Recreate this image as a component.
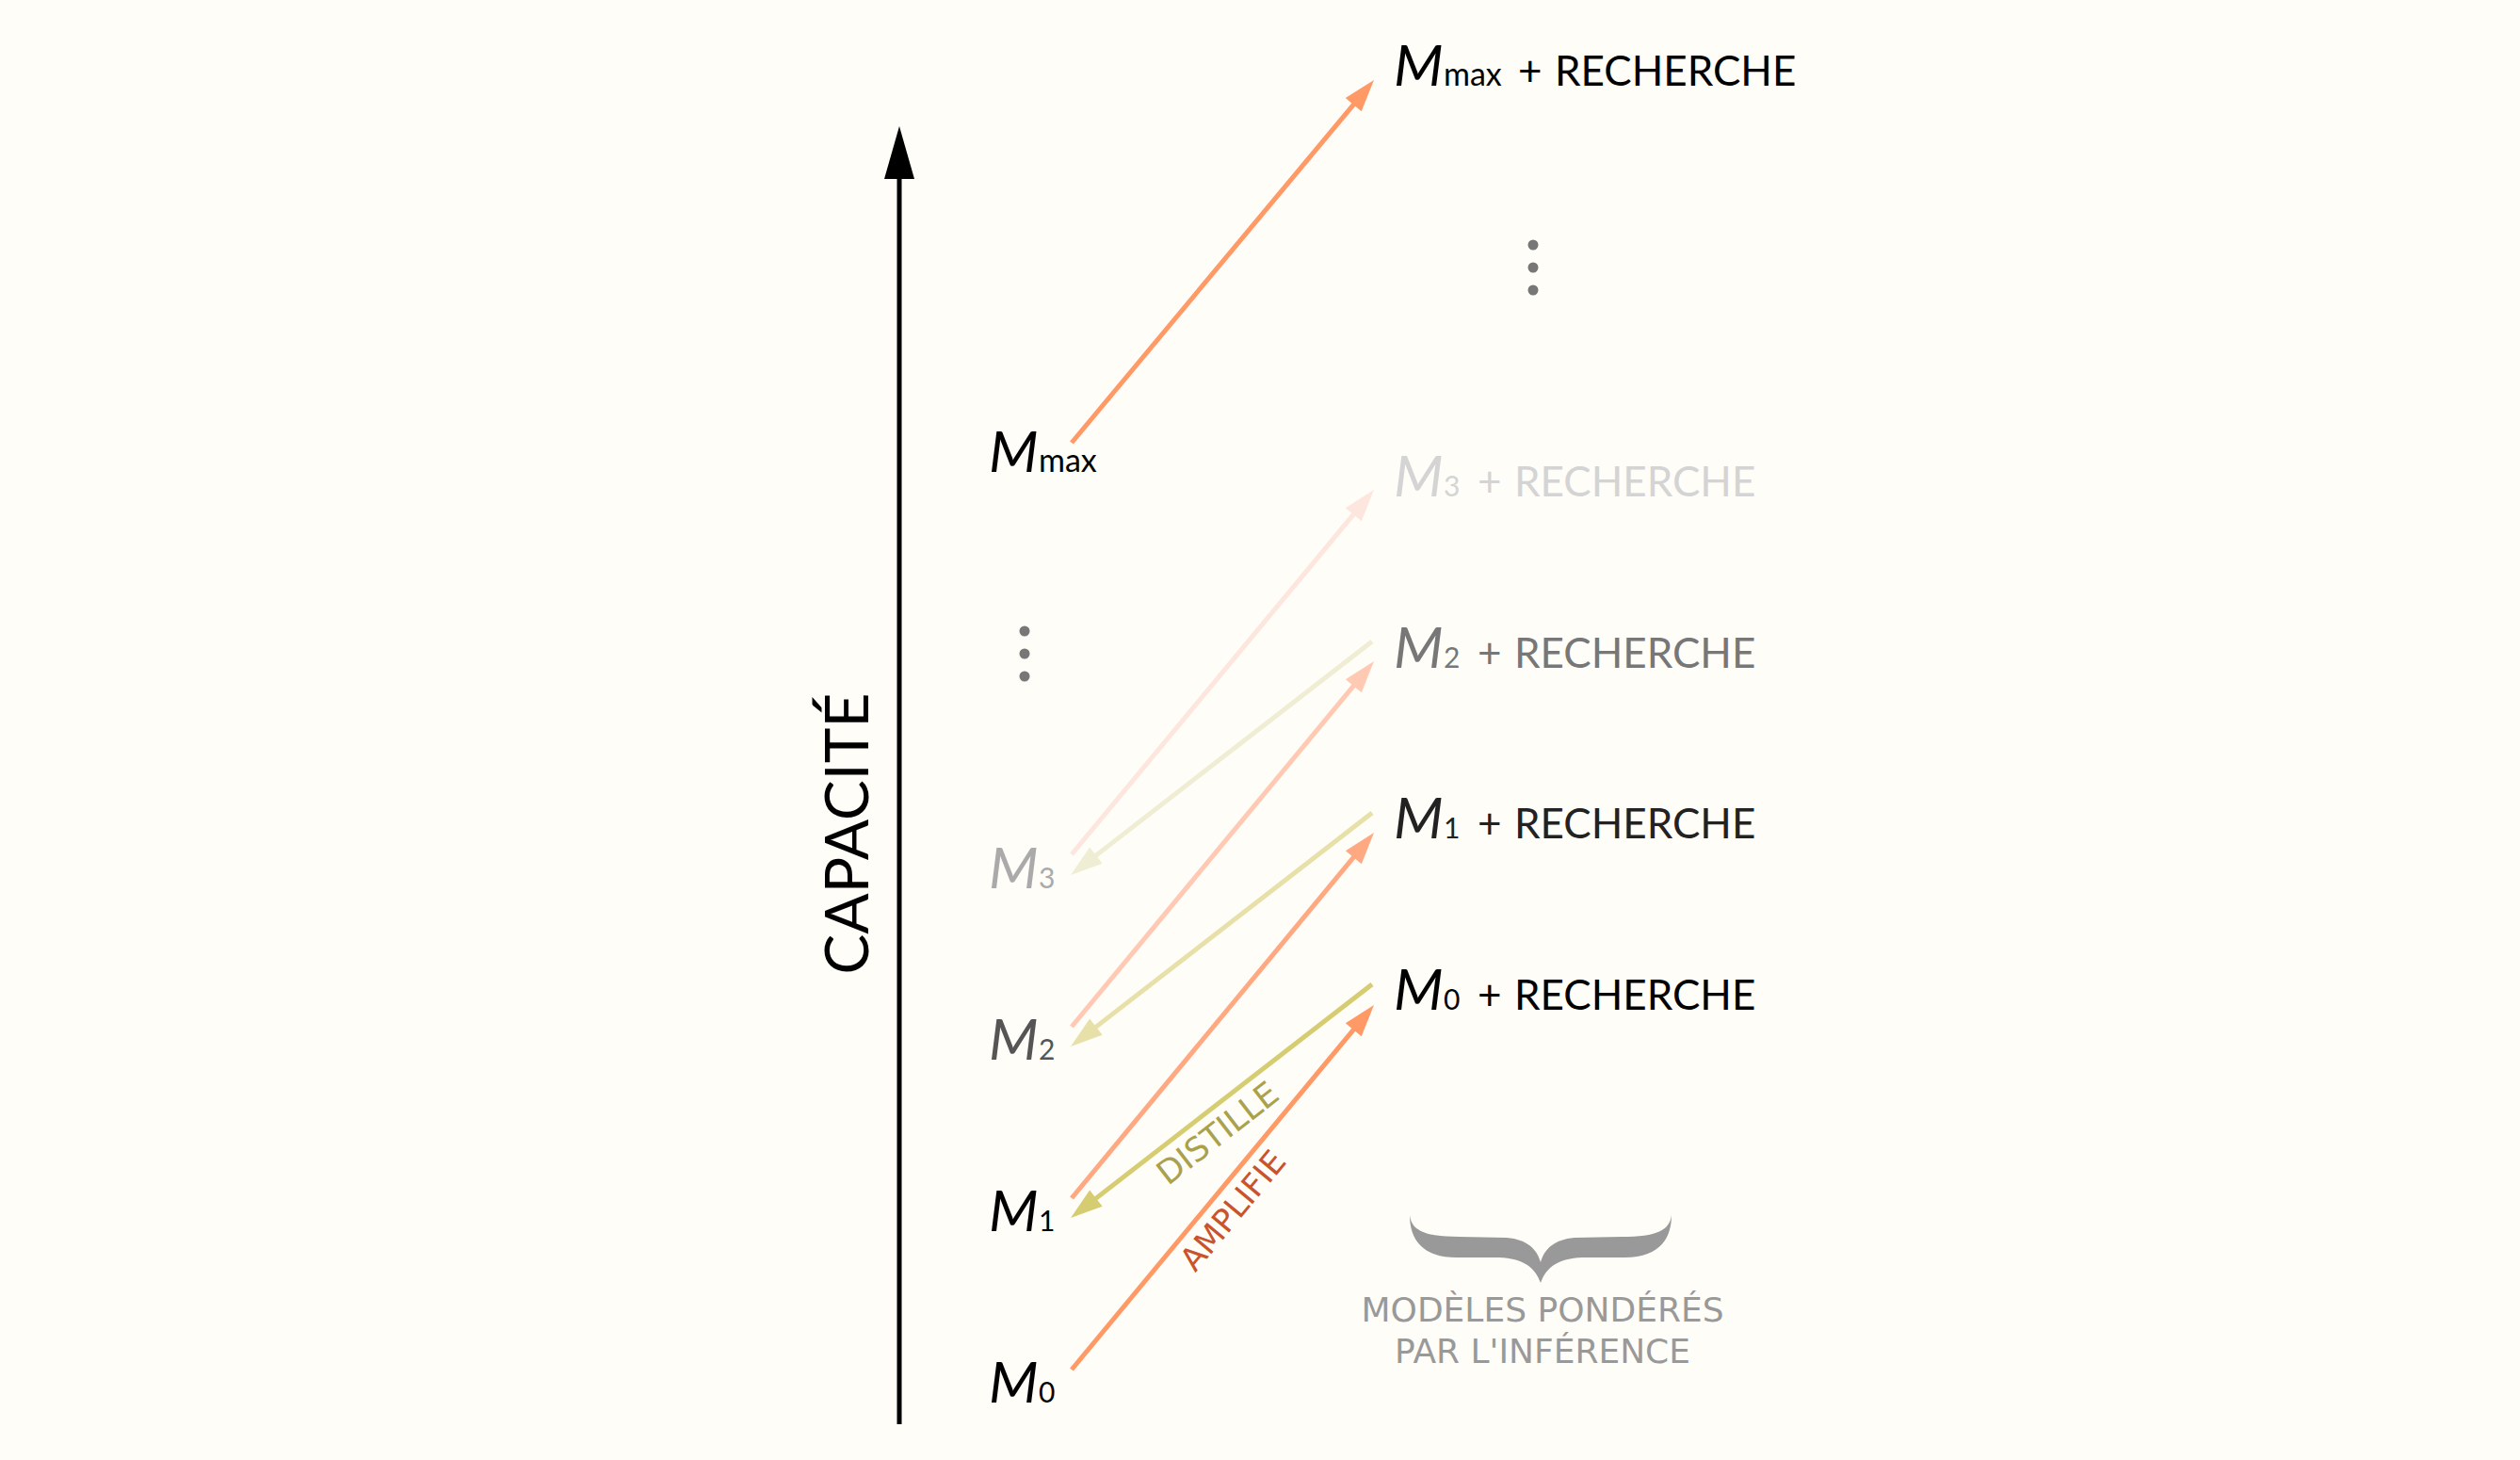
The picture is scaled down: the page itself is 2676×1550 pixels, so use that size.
type Pt = [number, number]

// amplify: M_i -> M_i + recherche (head at the right end)
const amplify: { from: Pt; to: Pt; color: string }[] = [
  { from: [1138, 907], to: [1459, 520], color: '#fde6dd' },
  { from: [1138, 1090], to: [1459, 702], color: '#ffc9b3' },
  { from: [1138, 1272], to: [1459, 884], color: '#ffa982' },
  { from: [1138, 1454], to: [1459, 1067], color: '#ff9966' },
  { from: [1138, 470], to: [1459, 85], color: '#ff9966' },
]

// distill: M_i + recherche -> M_i+1 (head at the left end)
const distill: { from: Pt; to: Pt; color: string }[] = [
  { from: [1457, 681], to: [1137, 929], color: '#efedd3' },
  { from: [1457, 863], to: [1137, 1111], color: '#e7e1a9' },
  { from: [1457, 1045], to: [1137, 1293], color: '#d6cd72' },
]

function Arrow({ from, to, color }: { from: Pt; to: Pt; color: string }) {
  const [x1, y1] = from
  const [x2, y2] = to
  const len = Math.hypot(x2 - x1, y2 - y1)
  const ux = (x2 - x1) / len
  const uy = (y2 - y1) / len
  const head = 34
  const hw = 11
  const bx = x2 - ux * head
  const by = y2 - uy * head
  const pts = `${x2},${y2} ${bx - uy * hw},${by + ux * hw} ${bx + uy * hw},${by - ux * hw}`
  return (
    <g>
      <line x1={x1} y1={y1} x2={bx + ux * 2} y2={by + uy * 2} stroke={color} strokeWidth={5} />
      <polygon points={pts} fill={color} />
    </g>
  )
}

const left = [
  { sub: 'max', y: 501, color: '#000000', big: true },
  { sub: '3', y: 943, color: '#aaaaaa' },
  { sub: '2', y: 1125, color: '#555555' },
  { sub: '1', y: 1307, color: '#000000' },
  { sub: '0', y: 1489, color: '#000000' },
]

const right = [
  { sub: 'max', y: 91, color: '#000000', big: true },
  { sub: '3', y: 527, color: '#d4d4d4' },
  { sub: '2', y: 709, color: '#777777' },
  { sub: '1', y: 890, color: '#222222' },
  { sub: '0', y: 1072, color: '#000000' },
]

function ModelLabel({ x, y, sub, color, big }: { x: number; y: number; sub: string; color: string; big?: boolean }) {
  return (
    <g fill={color} className="font-['Lato','Open_Sans',sans-serif]">
      <text x={x} y={y} fontSize={61} fontStyle="italic">M</text>
      <text x={x + 53} y={y} fontSize={big ? 34 : 30}>{sub}</text>
    </g>
  )
}

function Dots({ x, y }: { x: number; y: number }) {
  return (
    <g fill="#777777">
      <circle cx={x} cy={y} r={5.5} />
      <circle cx={x} cy={y + 24} r={5.5} />
      <circle cx={x} cy={y + 48} r={5.5} />
    </g>
  )
}

export default function App() {
  return (
    <div className="relative w-screen h-screen overflow-hidden bg-[#fffdf8]">
      <svg className="absolute inset-0" width={2676} height={1550} viewBox="0 0 2676 1550">
        {/* capacity axis */}
        <line x1={955} y1={1512} x2={955} y2={186} stroke="#000" strokeWidth={5} />
        <polygon points="955,134 939,190 971,190" fill="#000" />
        <text
          transform="translate(922 885) rotate(-90)"
          textAnchor="middle"
          fontSize={64}
          className="font-['Lato',sans-serif]"
          fill="#000"
        >
          CAPACITÉ
        </text>

        {distill.map((a, i) => <Arrow key={`d${i}`} {...a} />)}
        {amplify.map((a, i) => <Arrow key={`a${i}`} {...a} />)}

        {left.map(l => <ModelLabel key={`l${l.sub}`} x={1050} y={l.y} sub={l.sub} color={l.color} big={l.big} />)}

        {right.map(r => (
          <g key={`r${r.sub}`}>
            <ModelLabel x={1480} y={r.y} sub={r.sub} color={r.color} big={r.big} />
            <text
              x={r.big ? 1612 : 1569}
              y={r.y}
              fontSize={44}
              fill={r.color}
              className="font-['Lato','Open_Sans',sans-serif]"
            >
              +
            </text>
            <text
              x={r.big ? 1651 : 1608}
              y={r.y}
              fontSize={44}
              fill={r.color}
              className="font-['Lato','Open_Sans',sans-serif]"
            >
              RECHERCHE
            </text>
          </g>
        ))}

        <Dots x={1088} y={670} />
        <Dots x={1628} y={260} />

        <text
          transform="translate(1293 1203) rotate(-37.8)"
          textAnchor="middle"
          dominantBaseline="central"
          fontSize={35}
          fill="#aaa14c"
          className="font-['DejaVu_Sans',sans-serif]"
        >
          DISTILLE
        </text>
        <text
          transform="translate(1309 1285) rotate(-50.3)"
          textAnchor="middle"
          dominantBaseline="central"
          fontSize={34}
          fill="#c9532b"
          className="font-['DejaVu_Sans',sans-serif]"
        >
          AMPLIFIE
        </text>

        {/* brace */}
        <path
          d="M1497 1290 C1499 1306 1512 1313 1550 1313 L1600 1314 C1622 1316 1632 1326 1636 1340 C1640 1326 1650 1316 1672 1314 L1722 1313 C1760 1313 1773 1306 1775 1290 C1775 1312 1765 1335 1725 1335 L1680 1335 C1655 1336 1642 1345 1636 1362 C1630 1345 1617 1336 1592 1335 L1547 1335 C1507 1335 1497 1312 1497 1290 Z"
          fill="#999999"
        />
        <g fill="#999999" fontSize={36} textAnchor="middle" className="font-['DejaVu_Sans',sans-serif]">
          <text x={1638} y={1403}>MODÈLES PONDÉRÉS</text>
          <text x={1638} y={1447}>PAR L'INFÉRENCE</text>
        </g>
      </svg>
    </div>
  )
}
